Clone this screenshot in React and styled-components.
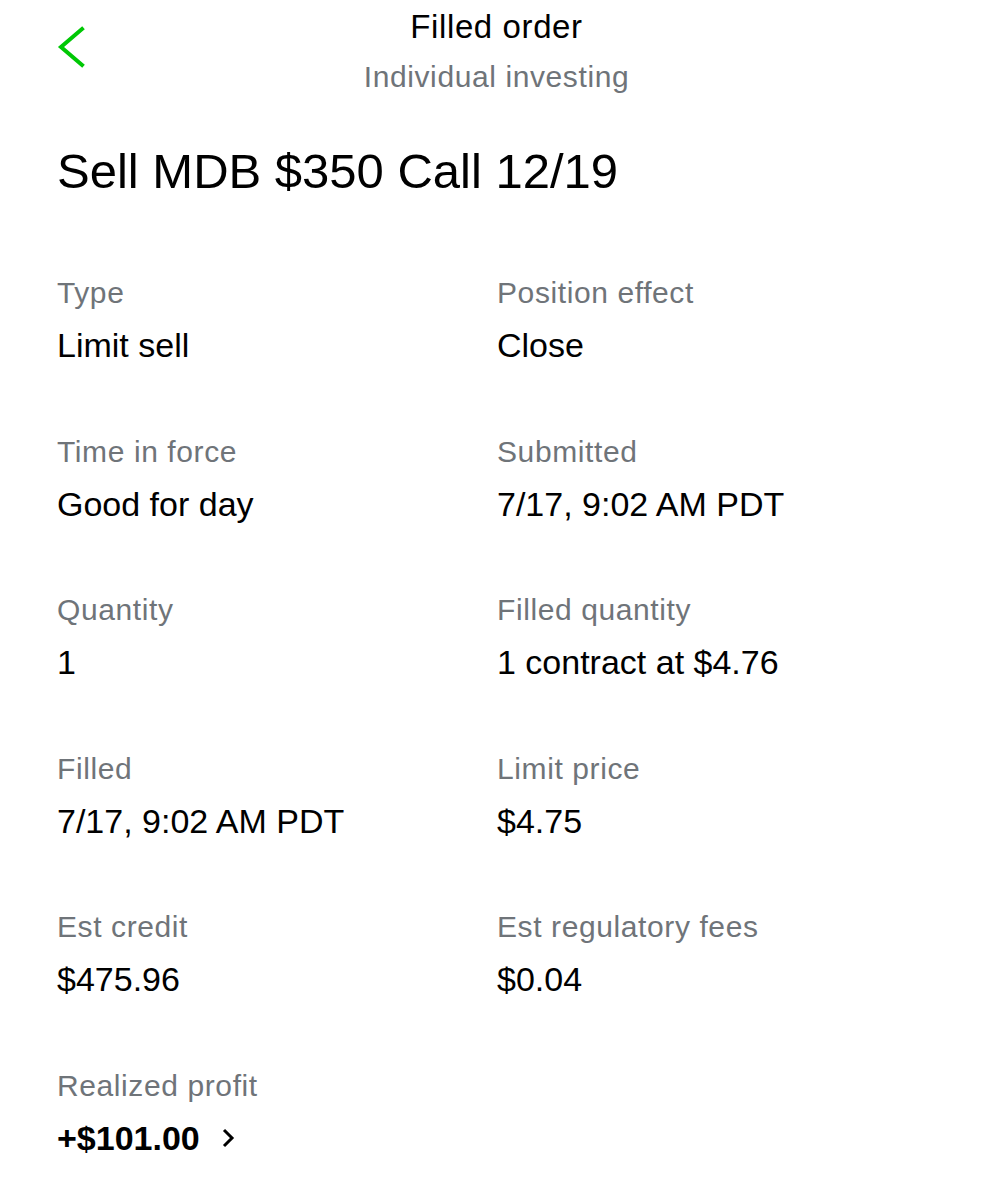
import React from 'react'
import styled, { createGlobalStyle } from 'styled-components'

const GlobalStyle = createGlobalStyle`
  body {
    margin: 0;
    background: #fff;
    font-family: "Liberation Sans", Arial, sans-serif;
    color: #000;
  }
`

const rows = [
  [
    { label: 'Type', value: 'Limit sell' },
    { label: 'Position effect', value: 'Close' },
  ],
  [
    { label: 'Time in force', value: 'Good for day' },
    { label: 'Submitted', value: '7/17, 9:02 AM PDT' },
  ],
  [
    { label: 'Quantity', value: '1' },
    { label: 'Filled quantity', value: '1 contract at $4.76' },
  ],
  [
    { label: 'Filled', value: '7/17, 9:02 AM PDT' },
    { label: 'Limit price', value: '$4.75' },
  ],
  [
    { label: 'Est credit', value: '$475.96' },
    { label: 'Est regulatory fees', value: '$0.04' },
  ],
]

function App() {
  return (
    <>
      <GlobalStyle />
      <StPage>
        <StHeader>
          <StBack aria-label="Back">
            <svg width="32" height="42" viewBox="0 0 32 42" fill="none">
              <path d="M27 3 L6 21 L27 39" stroke="#00c805" strokeWidth="4" strokeLinecap="square" />
            </svg>
          </StBack>
          <StHeaderTitle>Filled order</StHeaderTitle>
          <StHeaderSub>Individual investing</StHeaderSub>
        </StHeader>

        <StTitle>Sell MDB $350 Call 12/19</StTitle>

        <StGrid>
          {rows.map((row, i) =>
            row.map((cell) => (
              <StCell key={i + cell.label}>
                <StLabel>{cell.label}</StLabel>
                <StValue>{cell.value}</StValue>
              </StCell>
            ))
          )}
          <StCell>
            <StLabel>Realized profit</StLabel>
            <StProfit>
              +$101.00
              <svg width="16" height="22" viewBox="0 0 16 22" fill="none">
                <path d="M4 3 L12 11 L4 19" stroke="#000" strokeWidth="3" />
              </svg>
            </StProfit>
          </StCell>
        </StGrid>
      </StPage>
    </>
  )
}

const StPage = styled.div`
  width: 993px;
  min-height: 1200px;
  padding: 0 0 0 57px;
  box-sizing: border-box;
`
const StHeader = styled.header`
  position: relative;
  margin-left: -57px;
  padding-top: 7px;
  display: flex;
  flex-direction: column;
  align-items: center;
`
const StBack = styled.button`
  position: absolute;
  left: 55px;
  top: 26px;
  border: 0;
  background: none;
  padding: 0;
  cursor: pointer;
`
const StHeaderTitle = styled.div`
  font-size: 33px;
  line-height: 40px;
  letter-spacing: 0.6px;
  color: #000;
`
const StHeaderSub = styled.div`
  margin-top: 12px;
  font-size: 30px;
  line-height: 36px;
  letter-spacing: 0.6px;
  color: #6f7479;
`
const StTitle = styled.h1`
  margin: 44px 0 0;
  font-size: 49px;
  line-height: 64px;
  font-weight: 400;
`
const StGrid = styled.div`
  display: grid;
  grid-template-columns: 440px 1fr;
  row-gap: 67.5px;
  margin-top: 72px;
`
const StCell = styled.div`
  display: flex;
  flex-direction: column;
  gap: 13px;
`
const StLabel = styled.div`
  font-size: 30px;
  line-height: 36px;
  letter-spacing: 0.6px;
  color: #6f7479;
`
const StValue = styled.div`
  font-size: 34px;
  line-height: 42px;
`
const StProfit = styled(StValue)`
  font-weight: 700;
  display: flex;
  align-items: center;
  gap: 20px;
`

export default App
